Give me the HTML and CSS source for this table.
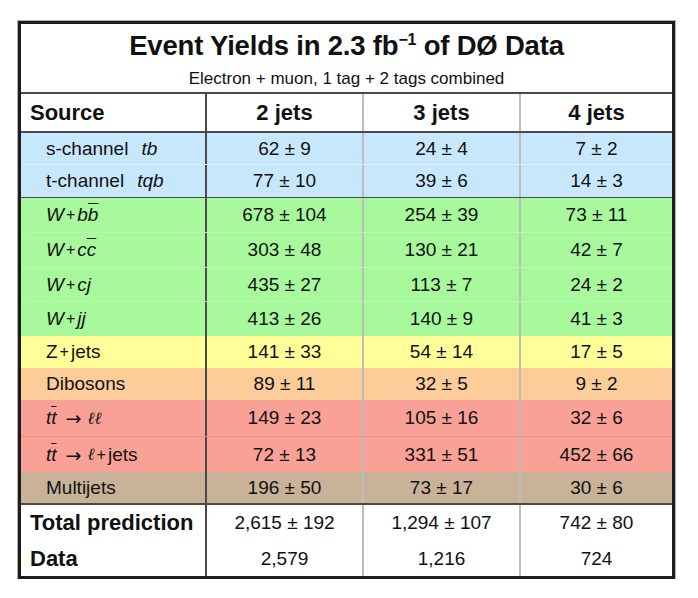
FILE: index.html
```html
<!DOCTYPE html>
<html>
<head>
<meta charset="utf-8">
<link rel="stylesheet" href="styles.css">
</head>
<body>
<div class="yields">
  <div class="caption">
    <div class="title">Event Yields in 2.3 fb<sup>&minus;1</sup> of DØ Data</div>
    <div class="subtitle">Electron + muon, 1 tag + 2 tags combined</div>
  </div>
  <div class="row head">
    <div class="cell label">Source</div>
    <div class="cell num c2">2 jets</div>
    <div class="cell num c3">3 jets</div>
    <div class="cell num c4">4 jets</div>
  </div>
  <div class="row blue h32 sep-blue">
    <div class="cell label sub">s-channel<i class="gap">tb</i></div>
    <div class="cell num c2">62 ± 9</div>
    <div class="cell num c3">24 ± 4</div>
    <div class="cell num c4">7 ± 2</div>
  </div>
  <div class="row blue h33 sep-dark1">
    <div class="cell label sub">t-channel<i class="gap">tqb</i></div>
    <div class="cell num c2">77 ± 10</div>
    <div class="cell num c3">39 ± 6</div>
    <div class="cell num c4">14 ± 3</div>
  </div>
  <div class="row green h35 sep-green">
    <div class="cell label sub"><i>W</i><span class="plus">+</span><i>b<span class="bar">b</span></i></div>
    <div class="cell num c2">678 ± 104</div>
    <div class="cell num c3">254 ± 39</div>
    <div class="cell num c4">73 ± 11</div>
  </div>
  <div class="row green h35 sep-green">
    <div class="cell label sub"><i>W</i><span class="plus">+</span><i>c<span class="bar">c</span></i></div>
    <div class="cell num c2">303 ± 48</div>
    <div class="cell num c3">130 ± 21</div>
    <div class="cell num c4">42 ± 7</div>
  </div>
  <div class="row green h34 sep-green">
    <div class="cell label sub"><i>W</i><span class="plus">+</span><i>cj</i></div>
    <div class="cell num c2">435 ± 27</div>
    <div class="cell num c3">113 ± 7</div>
    <div class="cell num c4">24 ± 2</div>
  </div>
  <div class="row green h34">
    <div class="cell label sub"><i>W</i><span class="plus">+</span><i>jj</i></div>
    <div class="cell num c2">413 ± 26</div>
    <div class="cell num c3">140 ± 9</div>
    <div class="cell num c4">41 ± 3</div>
  </div>
  <div class="row yellow h32">
    <div class="cell label sub">Z<span class="plus">+</span>jets</div>
    <div class="cell num c2">141 ± 33</div>
    <div class="cell num c3">54 ± 14</div>
    <div class="cell num c4">17 ± 5</div>
  </div>
  <div class="row orange h32">
    <div class="cell label sub">Dibosons</div>
    <div class="cell num c2">89 ± 11</div>
    <div class="cell num c3">32 ± 5</div>
    <div class="cell num c4">9 ± 2</div>
  </div>
  <div class="row red h37 sep-red">
    <div class="cell label sub"><i>t<span class="bar">t</span></i><span class="arrow">→</span><span class="ell">ℓℓ</span></div>
    <div class="cell num c2">149 ± 23</div>
    <div class="cell num c3">105 ± 16</div>
    <div class="cell num c4">32 ± 6</div>
  </div>
  <div class="row red h35">
    <div class="cell label sub"><i>t<span class="bar">t</span></i><span class="arrow">→</span><span class="ell">ℓ</span><span class="plus">+</span>jets</div>
    <div class="cell num c2">72 ± 13</div>
    <div class="cell num c3">331 ± 51</div>
    <div class="cell num c4">452 ± 66</div>
  </div>
  <div class="row brown h33 sep-dark2">
    <div class="cell label sub">Multijets</div>
    <div class="cell num c2">196 ± 50</div>
    <div class="cell num c3">73 ± 17</div>
    <div class="cell num c4">30 ± 6</div>
  </div>
  <div class="row h36">
    <div class="cell label strong">Total prediction</div>
    <div class="cell num c2">2,615 ± 192</div>
    <div class="cell num c3">1,294 ± 107</div>
    <div class="cell num c4">742 ± 80</div>
  </div>
  <div class="row h35">
    <div class="cell label strong">Data</div>
    <div class="cell num c2">2,579</div>
    <div class="cell num c3">1,216</div>
    <div class="cell num c4">724</div>
  </div>
</div>
</body>
</html>
```

FILE: styles.css
```css
* { box-sizing: border-box; }

html, body {
  margin: 0;
  background: #ffffff;
}

body {
  padding: 21px 0 0 18px;
  font-family: "Liberation Sans", Arial, Helvetica, sans-serif;
  color: #111111;
}

.yields {
  width: 657px;
  border: 3px solid #1c1c1c;
  box-shadow: 0 0 0 1px rgba(0, 0, 0, 0.3);
  background: #ffffff;
}

.caption {
  height: 70px;
  border-bottom: 2px solid #4a4a4a;
  display: flex;
  flex-direction: column;
  align-items: center;
  padding-top: 6px;
}

.title {
  font-size: 27.5px;
  font-weight: bold;
  line-height: 32px;
  letter-spacing: -0.2px;
}

.title sup {
  font-size: 16px;
  line-height: 0;
  vertical-align: 10px;
}

.subtitle {
  margin-top: 7px;
  font-size: 17px;
  line-height: 20px;
}

.row {
  display: grid;
  grid-template-columns: 184px 157px 157px 153px;
  font-size: 19px;
}

.cell {
  display: flex;
  align-items: center;
}

.num {
  justify-content: center;
}

.c2 { border-left: 2px solid #4a4a4a; }
.c3 { border-left: 2px solid #bdbdbd; }
.c4 { border-left: 2px solid #bdbdbd; }

.label { padding-left: 9px; }
.label.sub { padding-left: 25px; }

.head {
  height: 39px;
  border-bottom: 2px solid #4a4a4a;
  font-size: 22px;
  font-weight: bold;
}

.strong {
  font-size: 22px;
  font-weight: bold;
}

.h32 { height: 32px; }
.h33 { height: 33px; }
.h34 { height: 34px; }
.h35 { height: 35px; }
.h36 { height: 36px; }
.h37 { height: 37px; }

.blue   { background: #c7e8fc; }
.green  { background: #a7f99c; }
.yellow { background: #ffff99; }
.orange { background: #fccc99; }
.red    { background: #f9a196; }
.brown  { background: #c9b398; }

.sep-blue  { border-bottom: 1px solid #d8effd; }
.sep-green { border-bottom: 1px solid #b6fbab; }
.sep-red   { border-bottom: 1px solid #f28c80; }
.sep-dark1 { border-bottom: 1px solid #4a4a4a; }
.sep-dark2 { border-bottom: 2px solid #4a4a4a; }

.gap { margin-left: 13px; }

.bar { text-decoration: overline; }

.plus {
  font-size: 16px;
  margin: 0 2px;
}

.arrow {
  font-family: "DejaVu Sans", sans-serif;
  margin: 0 6px 0 9px;
  font-size: 19px;
}

.ell {
  font-family: "DejaVu Serif", "Liberation Serif", serif;
  font-style: italic;
  font-size: 17px;
}
```
